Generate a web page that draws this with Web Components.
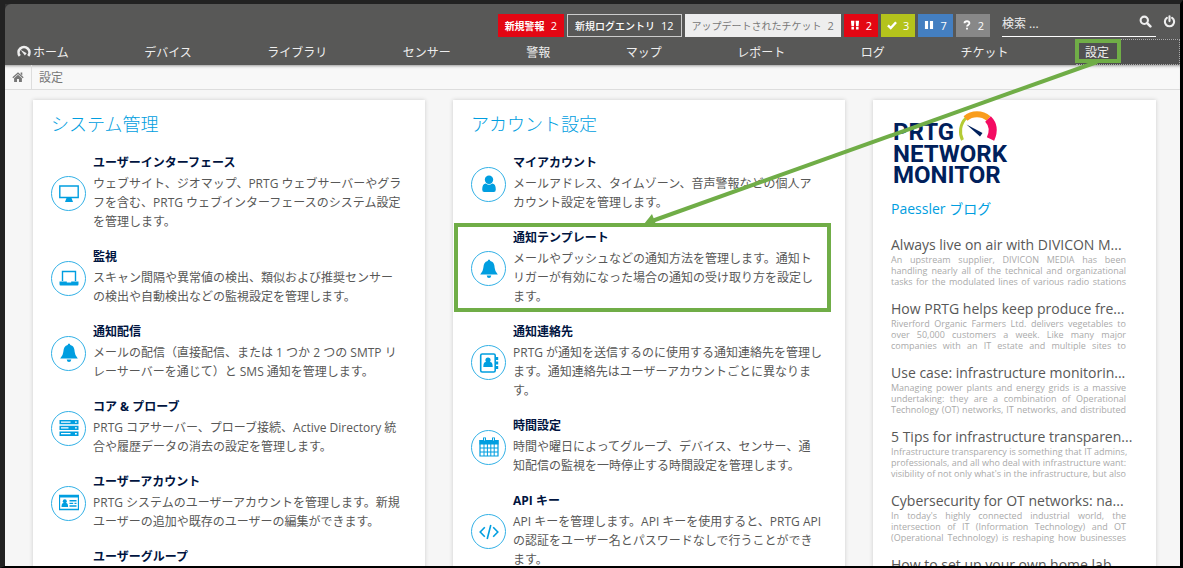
<!DOCTYPE html>
<html lang="ja">
<head>
<meta charset="utf-8">
<title>PRTG Network Monitor</title>
<style>
  html, body{height: 100%; margin: 0;}
  body{font-family: "Open Sans", "Noto Sans CJK JP", sans-serif; font-size: 12px; color: #585857; overflow: hidden;}
</style>
</head>
<body>
<prtg-app></prtg-app>

<script>
const icons = {
  gauge: `<path d="M3.200 12.500A6.200 6.200 0 1 1 12.800 12.500" fill="none" stroke="currentColor" stroke-width="3"/><path d="M4 5.500L11 9.500 9 12z" fill="currentColor"/>`,
  home: `<path d="M8 1.500L15.500 8.200 14.400 9.500 8 4 1.600 9.500.5 8.200zM11.500 2h2.200v4l-2.200-2zM2.800 9.500L8 5l5.200 4.500V14.500H9.300v-4H6.700v4H2.800z" fill="currentColor"/>`,
  search: `<circle cx="6.500" cy="6.500" r="4.500" fill="none" stroke="currentColor" stroke-width="2.600"/><path d="M10 10L14 14" stroke="currentColor" stroke-width="3.200" stroke-linecap="round"/>`,
  power: `<path d="M4.800 3.500a5.700 5.700 0 1 0 6.400 0M8 1.500v6" fill="none" stroke="currentColor" stroke-width="2.600" stroke-linecap="round"/>`,
  down: `<path d="M1.500 1h5.500L6.300 10H2.300zM9 1h5.500L13.700 10H9.700zM2.300 11.200h4v3.800h-4zM9.700 11.200h4v3.800h-4z" fill="currentColor"/>`,
  up: `<path d="M1.500 8.500L6 12.800 14.500 3.500" fill="none" stroke="currentColor" stroke-width="3.800"/>`,
  paused: `<path d="M1.500 1.500h5v13h-5zM9.500 1.500h5v13h-5z" fill="currentColor"/>`,
  unknown: `<path d="M4 5.200C4.300.8 12.200 1 11.800 5.500 11.500 7.800 8 8 8 10.500M8 12.200v2.800" fill="none" stroke="currentColor" stroke-width="3"/>`,
  desktop: `<path d="M.8 2h18.400v11.500H.8z" fill="none" stroke="currentColor" stroke-width="1.400"/><path d="M7.500 14h5l1.500 4H6z" fill="currentColor"/>`,
  laptop: `<path d="M3.500 13V3.500h13V13" fill="none" stroke="currentColor" stroke-width="1.400"/><path d="M.5 13.500h7.300v1h4.400v-1h7.300V16q0 1.500-1 1.500H1.500q-1 0-1-1.500z" fill="currentColor"/>`,
  bell: `<path d="M10 .5q1.200 0 1.300 1.500C15 3 15.500 6 15.700 9q.2 3.500 3.100 6.500H1.200Q4.100 12.500 4.300 9 4.500 3 8.700 2 8.800.5 10 .5zM7.700 16.500h4.600Q12 19 10 19t-2.300-2.500z" fill="currentColor"/>`,
  server: `<path d="M.5 2h19v4.300H.5zM.5 7.800h19v4.300H.5zM.5 13.600h19v4.300H.5z" fill="currentColor"/><path d="M2 4.100h9.500M2 9.900h7.500M2 15.700h9.500" stroke="#fff" stroke-width="1.300"/><path d="M16 4.100h1.800M16 9.900h1.800M16 15.700h1.800" stroke="#fff" stroke-width="1.400"/>`,
  card: `<path d="M.4 2.500h19.200v14H.4z" fill="none" stroke="currentColor" stroke-width="1.500"/><path d="M0 2h20v2.500H0z" fill="currentColor"/><circle cx="5.800" cy="8.300" r="2" fill="currentColor"/><path d="M2.500 14q0-4 2-4h2.600q2 0 2 4zM10.500 7h7v1.500h-7zM10.500 9.700h3.700v1.300h-3.700zM15.500 9.700h2v1.300h-2zM10.500 12.200h7v1.500h-7z" fill="currentColor"/>`,
  user: `<circle cx="10" cy="5.800" r="4.200" fill="currentColor"/><path d="M3.200 15.500q0-6 3.700-6Q10 12 13.100 9.500q3.700 0 3.700 6 0 2.500-2 2.500H5.200q-2 0-2-2.500z" fill="currentColor"/>`,
  book: `<rect x="1.700" y="1" width="14.500" height="18" rx="1.500" fill="none" stroke="currentColor" stroke-width="1.600"/><circle cx="9" cy="7" r="2.600" fill="currentColor"/><path d="M4.300 14q0-5 2.500-5h4.400q2.500 0 2.500 5zM17 4h2.200v3H17zM17 8.500h2.200v3H17zM17 13h2.200v3H17z" fill="currentColor"/>`,
  calendar: `<path d="M1 3.500h18V19H1z" fill="none" stroke="currentColor" stroke-width="1.200"/><path d="M.5 3h19v4.500H.5zM4 .5h3v4H4zM13 .5h3v4h-3z" fill="currentColor"/><path d="M5 7v12M8.400 7v12M11.800 7v12M15.200 7v12M1 11h18M1 15h18" stroke="currentColor" stroke-width="1"/><path d="M5.500 1.200v2.300M14.500 1.200v2.300" stroke="#fff" stroke-width=".9"/>`,
  code: `<path d="M5.800 5.200L1.200 10l4.600 4.800M14.200 5.200L18.800 10l-4.600 4.800M11.800 3L8.200 17" fill="none" stroke="currentColor" stroke-width="1.600"/>`
};

const smallIcons = ["gauge", "home", "search", "power", "down", "up", "paused", "unknown"];

const systemItems = [
  ["desktop", "ユーザーインターフェース", ["ウェブサイト、ジオマップ、PRTG ウェブサーバーやグラ", "フを含む、PRTG ウェブインターフェースのシステム設定", "を管理します。"]],
  ["laptop", "監視", ["スキャン間隔や異常値の検出、類似および推奨センサー", "の検出や自動検出などの監視設定を管理します。"]],
  ["bell", "通知配信", ["メールの配信（直接配信、または 1 つか 2 つの SMTP リ", "レーサーバーを通じて）と SMS 通知を管理します。"]],
  ["server", "コア & プローブ", ["PRTG コアサーバー、プローブ接続、Active Directory 統", "合や履歴データの消去の設定を管理します。"]],
  ["card", "ユーザーアカウント", ["PRTG システムのユーザーアカウントを管理します。新規", "ユーザーの追加や既存のユーザーの編集ができます。"]],
  ["user", "ユーザーグループ", ["", "", "", ""]]
];

const accountItems = [
  ["user", "マイアカウント", ["メールアドレス、タイムゾーン、音声警報などの個人ア", "カウント設定を管理します。"]],
  ["bell", "通知テンプレート", ["メールやプッシュなどの通知方法を管理します。通知ト", "リガーが有効になった場合の通知の受け取り方を設定し", "ます。"]],
  ["book", "通知連絡先", ["PRTG が通知を送信するのに使用する通知連絡先を管理し", "ます。通知連絡先はユーザーアカウントごとに異なりま", "す。"]],
  ["calendar", "時間設定", ["時間や曜日によってグループ、デバイス、センサー、通", "知配信の監視を一時停止する時間設定を管理します。"]],
  ["code", "API キー", ["API キーを管理します。API キーを使用すると、PRTG API", "の認証をユーザー名とパスワードなしで行うことができ", "ます。"]]
];

const posts = [
  ["Always live on air with DIVICON M...", ["An upstream supplier, DIVICON MEDIA has been", "handling nearly all of the technical and organizational", "tasks for the modulated lines of various radio stations"]],
  ["How PRTG helps keep produce fre...", ["Riverford Organic Farmers Ltd. delivers vegetables to", "over 50,000 customers a week. Like many major", "companies with an IT estate and multiple sites to"]],
  ["Use case: infrastructure monitorin...", ["Managing power plants and energy grids is a massive", "undertaking: they are a combination of Operational", "Technology (OT) networks, IT networks, and distributed"]],
  ["5 Tips for infrastructure transparen...", ["Infrastructure transparency is something that IT admins,", "professionals, and all who deal with infrastructure want:", "visibility of not only what's in the infrastructure, but also"]],
  ["Cybersecurity for OT networks: na...", ["In today's highly connected industrial world, the", "intersection of IT (Information Technology) and OT", "(Operational Technology) is reshaping how businesses"]],
  ["How to set up your own home lab...", []]
];

class BaseElement extends HTMLElement {
  constructor() {
    super();
    this.attachShadow({ mode: 'open' });
  }

  connectedCallback() {
    this.shadowRoot.innerHTML = this.render();
  }
}

class Icon extends BaseElement {
  render(){
    let name = this.getAttribute("name")
    let size = smallIcons.includes(name) ? 16 : 20
    return `
      <style>
        :host{display: flex; width: 10px; height: 10px; flex: none;}
        svg{width: 100%; height: 100%;}
      </style>
      <svg viewBox="0 0 ${size} ${size}" aria-hidden="true">${icons[name]}</svg>
    `;
  }
}

class Badge extends BaseElement {
  render(){
    return `
      <style>
        :host{display: block; color: #fff; font-size: 10px;}
        button{
          box-sizing: border-box; height: 23px; padding: 0 7px; border: 0;
          display: flex; align-items: center; gap: 6px; white-space: nowrap;
          background: var(--badge, #e30613); color: inherit; font: inherit;
        }
        .label{font-weight: var(--weight, 600);}
        .count{font-size: 11px;}
        :host([status]) button{padding: 0 6px;}
        :host([outline]) button{background: none; border: 1px solid #ccc;}
        :host([outline]){--weight: 500;}
        :host([light]){--badge: #eee; --weight: 400; color: #777;}
      </style>
      <button><span class="label"><slot></slot></span><span class="count">${this.getAttribute("count")}</span></button>
    `;
  }
}

class StatusBar extends BaseElement {
  render(){
    return `
      <style>
        :host{display: flex; justify-content: flex-end; align-items: center; gap: 3px; padding-top: 7px; color: #fff;}
        form{display: flex; align-items: center; width: 154px; height: 22px; margin-left: 9px; border-bottom: 1px solid #fff;}
        input{flex: 1; min-width: 0; padding: 0 0 2px; border: 0; outline: 0; background: none; color: #fff; font: inherit;}
        input::placeholder{color: #eee; opacity: 1;}
        button{display: flex; padding: 0 4px 8px; border: 0; background: none; color: #eee;}
        form button{padding: 0 4px 6px;}
        button prtg-icon{width: 13px; height: 13px;}
        .up{--badge: #b4c31c;}
        .paused{--badge: #447fc1;}
        .unknown{--badge: #888;}
      </style>
      <prtg-badge count="2">新規警報</prtg-badge>
      <prtg-badge outline count="12">新規ログエントリ</prtg-badge>
      <prtg-badge light count="2">アップデートされたチケット</prtg-badge>
      <prtg-badge status count="2"><prtg-icon name="down"></prtg-icon></prtg-badge>
      <prtg-badge status class="up" count="3"><prtg-icon name="up"></prtg-icon></prtg-badge>
      <prtg-badge status class="paused" count="7"><prtg-icon name="paused"></prtg-icon></prtg-badge>
      <prtg-badge status class="unknown" count="2"><prtg-icon name="unknown"></prtg-icon></prtg-badge>
      <form>
        <input type="text" placeholder="検索 ..." aria-label="検索">
        <button type="button" aria-label="検索"><prtg-icon name="search"></prtg-icon></button>
      </form>
      <button aria-label="ログアウト"><prtg-icon name="power"></prtg-icon></button>
    `;
  }
}

class MainMenu extends BaseElement {
  render(){
    let entries = ["デバイス", "ライブラリ", "センサー", "警報", "マップ", "レポート", "ログ", "チケット"]
    return `
      <style>
        :host{display: block;}
        nav{display: flex; justify-content: space-between; height: 26px;}
        a{display: flex; align-items: center; color: #eee; text-decoration: none; white-space: nowrap;}
        a:first-child{padding-left: 12px;}
        a:last-child{box-sizing: border-box; width: 104px; margin-left: -8px; padding-left: 8px; border: 1px dotted #aaa; background: #505050;}
        prtg-icon{width: 14px; height: 14px; margin-right: 2px;}
      </style>
      <nav>
        <a href="#"><prtg-icon name="gauge"></prtg-icon>ホーム</a>
        ${entries.map(e => `<a href="#">${e}</a>`).join("")}
        <a href="#">設定</a>
      </nav>
    `;
  }
}

class Breadcrumb extends BaseElement {
  render(){
    return `
      <style>
        :host{display: flex; height: 24px; border-bottom: 1px solid #ddd; box-shadow: inset 0 3px 3px -2px #999; background: #f8f8f8;}
        a{display: flex; align-items: center; padding: 0 7px; color: #777; text-decoration: none;}
        a:first-of-type{border-right: 1px solid #ddd;}
        prtg-icon{width: 12px; height: 12px;}
      </style>
      <a href="#" aria-label="ホーム"><prtg-icon name="home"></prtg-icon></a>
      <a href="#">設定</a>
    `;
  }
}

class Card extends BaseElement {
  render(){
    return `
      <style>
        :host{display: block; padding: 12px 18px; background: #fff; box-shadow: 0 0 4px #ccc;}
      </style>
      <slot></slot>
    `;
  }
}

class SettingsItem extends BaseElement {
  render(){
    return `
      <style>
        :host{display: flex; align-items: center; gap: 7px; margin-bottom: 13px; white-space: nowrap;}
        .ring{
          box-sizing: border-box; width: 35px; height: 35px; flex: none; color: #009ee0;
          display: flex; align-items: center; justify-content: center;
          border: 1px solid #33b1e6; border-radius: 50%;
        }
        .text{padding-bottom: 3px;}
        prtg-icon{width: 20px; height: 20px;}
        h3{margin: 0 0 1px; font-size: 12px; line-height: 20px; font-weight: 700;}
        h3 a{color: #00143f; text-decoration: none;}
        p{margin: 0; line-height: 19px;}
      </style>
      <span class="ring"><prtg-icon name="${this.getAttribute("icon")}"></prtg-icon></span>
      <div class="text">
        <h3><a href="#"><slot name="title"></slot></a></h3>
        <p><slot></slot></p>
      </div>
    `;
  }
}

class SettingsList extends BaseElement {
  render(){
    let items = this.getAttribute("list") == "system" ? systemItems : accountItems
    return `
      <style>
        :host{display: block;}
        h2{margin: 0 0 17px; color: #009ee0; font-size: 18px; line-height: 24px; font-weight: 300;}
      </style>
      <h2><slot></slot></h2>
      ${items.map(([icon, title, lines]) => `
        <prtg-settings-item icon="${icon}">
          <span slot="title">${title.replace("&", "&amp;")}</span>${lines.join("<br>")}
        </prtg-settings-item>`).join("")}
    `;
  }
}

class Logo extends BaseElement {
  render(){
    return `
      <style>
        :host{display: block; height: 76px; margin-bottom: 10px;}
        svg{display: block; overflow: visible;}
        text{font: 700 24px Roboto, sans-serif; fill: #00205b;}
      </style>
      <svg width="120" height="76" viewBox="0 0 120 76" role="img" aria-label="PRTG Network Monitor">
        <text x="2" y="28">PRTG</text>
        <text x="2" y="50">NETWORK</text>
        <text x="2" y="71">MONITOR</text>
        <path d="M71.500 28C68 21 69 12 75 6" fill="none" stroke="#b4cb34" stroke-width="3"/>
        <path d="M74.500 6.500A18 18 0 0 1 97.500 6.500" fill="none" stroke="#f99d1c" stroke-width="6"/>
        <path d="M97 7Q105 15 99.500 27" fill="none" stroke="#f40b62" stroke-width="8"/>
        <path d="M75.500 12.500L91.500 21 89 24.500z" fill="#00205b"/>
      </svg>
    `;
  }
}

class Blog extends BaseElement {
  render(){
    return `
      <style>
        :host{display: block; padding-right: 12px;}
        h2{margin: 0 0 15px; color: #009ee0; font-size: 14px; line-height: 22px; font-weight: 400;}
        article{margin-bottom: 12px; white-space: nowrap;}
        h3{margin: 0; font-size: 14px; line-height: 19px; font-weight: 400;}
        h3 a{color: #585857; text-decoration: none;}
        p{margin: 0; color: #aaa; font-size: 9px; line-height: 11px; text-align: justify; text-align-last: justify;}
      </style>
      <h2>Paessler ブログ</h2>
      ${posts.map(([title, lines]) => `
        <article>
          <h3><a href="#">${title}</a></h3>
          <p>${lines.join("<br>")}</p>
        </article>`).join("")}
    `;
  }
}

// Green frames and arrow laid over the page to point out a menu entry
class Callout extends BaseElement {
  render(){
    return `
      <style>
        :host{position: absolute; top: 0; left: 0; pointer-events: none;}
        svg{display: block;}
      </style>
      <svg width="1183" height="568" viewBox="0 0 1183 568" aria-hidden="true" fill="none" stroke="#70ad47" stroke-width="4">
        <path d="M1077 41h42v20h-42zM456 225h373v85H456z"/>
        <path d="M1097 62L652 221"/>
        <path d="M644 224L652 214 657 227z" fill="#70ad47" stroke="none"/>
      </svg>
    `;
  }
}

class App extends BaseElement {
  render(){
    return `
      <style>
        :host{display: block; position: relative;}
        .frame{
          box-sizing: border-box; height: 100vh; overflow: hidden;
          display: flex; flex-direction: column; background: #333;
          border: solid; border-width: 4px 3px 2px 5px; border-color: #222 #000 #000 #222;
        }
        header{background: #585857; border-radius: 6px 0 0 0; flex: none;}
        prtg-status-bar{height: 28px;}
        prtg-breadcrumb{flex: none;}
        main{
          flex: 1; min-height: 0; background: #f6f6f6; padding: 10px 24px 0 28px;
          display: grid; gap: 28px;
          grid-template-columns: minmax(0, 392fr) minmax(0, 392fr) minmax(0, 283fr);
        }
      </style>
      <div class="frame">
        <header>
          <prtg-status-bar></prtg-status-bar>
          <prtg-main-menu></prtg-main-menu>
        </header>
        <prtg-breadcrumb></prtg-breadcrumb>
        <main>
          <prtg-card><prtg-settings-list list="system">システム管理</prtg-settings-list></prtg-card>
          <prtg-card><prtg-settings-list list="account">アカウント設定</prtg-settings-list></prtg-card>
          <prtg-card><prtg-logo></prtg-logo><prtg-blog></prtg-blog></prtg-card>
        </main>
      </div>
      <prtg-callout></prtg-callout>
    `;
  }
}

window.customElements.define("prtg-icon", Icon);
window.customElements.define("prtg-badge", Badge);
window.customElements.define("prtg-status-bar", StatusBar);
window.customElements.define("prtg-main-menu", MainMenu);
window.customElements.define("prtg-breadcrumb", Breadcrumb);
window.customElements.define("prtg-card", Card);
window.customElements.define("prtg-settings-item", SettingsItem);
window.customElements.define("prtg-settings-list", SettingsList);
window.customElements.define("prtg-logo", Logo);
window.customElements.define("prtg-blog", Blog);
window.customElements.define("prtg-callout", Callout);
window.customElements.define("prtg-app", App);
</script>
</body>
</html>
